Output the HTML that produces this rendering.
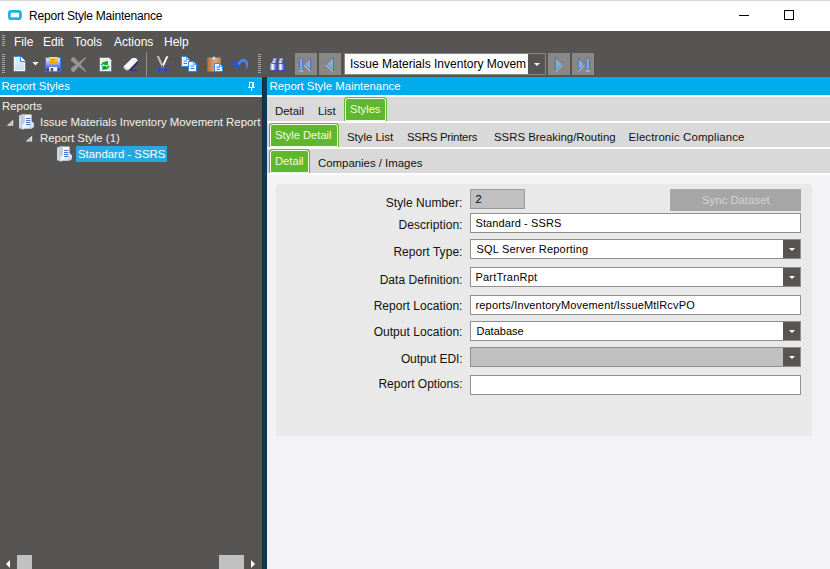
<!DOCTYPE html>
<html>
<head>
<meta charset="utf-8">
<title>Report Style Maintenance</title>
<style>
*{box-sizing:border-box;margin:0;padding:0}
html,body{width:830px;height:569px;overflow:hidden;background:#f3f3f5}
body{font-family:"Liberation Sans",sans-serif;font-size:12px;color:#000;position:relative}
.abs{position:absolute}
.t{position:absolute;white-space:nowrap;line-height:14px}
/* title bar */
#titlebar{left:0;top:0;width:830px;height:31px;background:#fff;border-top:1px solid #d4d4d4}
/* dark bars */
#dark{left:0;top:31px;width:830px;height:46px;background:#575553}
.menu{color:#fff;font-size:12px;top:35px}
.grip{position:absolute;width:3px;background:repeating-linear-gradient(to bottom,#a9a7a5 0,#a9a7a5 1px,transparent 1px,transparent 2px)}
.navbtn{position:absolute;top:53px;width:22px;height:22px;background:#8a8886}
/* headers */
.hdr{position:absolute;top:77px;height:18px;background:#00acee;color:#fff;font-size:11.4px}
/* left panel */
#left{left:0;top:95px;width:262px;height:474px;background:#575553;border-top:2px solid #fff}
.tree{color:#f1f1f1;font-size:11.4px}
#split{left:262px;top:77px;width:5px;height:492px;background:#073a5d;border-left:1px solid #22282c}
/* right */
.tabrow{position:absolute;left:267px;width:563px;background:#d9d9d9}
.tab{position:absolute;font-size:11.4px;white-space:nowrap;line-height:14px;color:#111}
.gtab{position:absolute;background:#5eb72d;border:1px solid #5eb72d;border-bottom:none;border-radius:4px 4px 0 0;box-shadow:inset 0 0 0 1px #f2fbea}
.gtab span{position:absolute;color:#f3fbe8;font-size:11.4px;white-space:nowrap;line-height:14px}
#group{left:276px;top:184px;width:536px;height:252px;background:#e9e9e9;border-radius:3px}
.lbl{position:absolute;font-size:12px;white-space:nowrap;line-height:14px;text-align:right;width:200px;left:262.5px;color:#111;letter-spacing:.05px}
.inp{position:absolute;left:470px;width:331px;height:20px;background:#fff;border:1px solid #8f8f8f;font-size:11px;line-height:18px;padding-left:5.5px;white-space:nowrap;overflow:hidden;letter-spacing:.2px}
.dd{position:absolute;right:0;top:0;width:17px;height:18px;background:#575553}
.dd:after{content:"";position:absolute;left:5.5px;top:8px;border-left:3px solid transparent;border-right:3px solid transparent;border-top:3.2px solid #fff}
</style>
</head>
<body>
<!-- Title bar -->
<div id="titlebar" class="abs"></div>
<svg class="abs" style="left:6px;top:8px" width="18" height="14" viewBox="6 8 18 14"><rect x="9.4" y="11.45" width="11" height="7.2" rx="1.7" ry="1.7" fill="#fff" stroke="#1db3ea" stroke-width="2.8"/></svg>
<div class="t" style="left:29px;top:9px;font-size:12px;letter-spacing:-.2px;color:#000">Report Style Maintenance</div>
<div class="abs" style="left:739px;top:15px;width:10px;height:1px;background:#000"></div>
<div class="abs" style="left:784px;top:10px;width:10px;height:10px;border:1px solid #000"></div>

<!-- Menu + toolbar -->
<div id="dark" class="abs"></div>
<div class="grip" style="left:2px;top:35px;height:11px"></div>
<div class="grip" style="left:2px;top:54px;height:20px"></div>
<div class="t menu" style="left:14px">File</div>
<div class="t menu" style="left:43px">Edit</div>
<div class="t menu" style="left:74px">Tools</div>
<div class="t menu" style="left:114px">Actions</div>
<div class="t menu" style="left:164px">Help</div>

<!-- toolbar icons placeholder -->
<!--ICONS-->
<div class="grip" style="left:258px;top:54px;height:20px"></div>

<div class="navbtn" style="left:295px"></div>
<div class="navbtn" style="left:319px"></div>
<div class="abs" style="left:344px;top:53px;width:202px;height:22px;background:#fff;border:1px solid #8a8886"></div>
<div class="t" style="left:350px;top:57px;font-size:12px;width:176.3px;overflow:hidden;color:#000">Issue Materials Inventory Movement Report</div>
<div class="abs" style="left:528px;top:54px;width:17px;height:20px;background:#575553"></div>
<div class="abs" style="left:533.5px;top:63px;border-left:3px solid transparent;border-right:3px solid transparent;border-top:3.2px solid #fff"></div>
<div class="navbtn" style="left:548px"></div>
<div class="navbtn" style="left:572px"></div>

<svg class="abs" style="left:0;top:52px" width="600" height="25" viewBox="0 0 600 25">
<defs>
<linearGradient id="gdoc" x1="0" y1="0" x2="0" y2="1"><stop offset="0" stop-color="#e4f2fd"/><stop offset="1" stop-color="#bfdffa"/></linearGradient>
<linearGradient id="gsave" x1="0" y1="0" x2="0" y2="1"><stop offset="0" stop-color="#eef0fd"/><stop offset=".45" stop-color="#9aa6ee"/><stop offset="1" stop-color="#1c2cb0"/></linearGradient>
<linearGradient id="gyel" x1="0" y1="0" x2="0" y2="1"><stop offset="0" stop-color="#ffe94d"/><stop offset="1" stop-color="#f2a400"/></linearGradient>
<linearGradient id="gbrown" x1="0" y1="0" x2="1" y2="0"><stop offset="0" stop-color="#b8703a"/><stop offset=".6" stop-color="#e0a878"/><stop offset="1" stop-color="#c98850"/></linearGradient>
<linearGradient id="gnav" x1="0" y1="0" x2="0" y2="1"><stop offset="0" stop-color="#a0a8bc"/><stop offset=".5" stop-color="#98a6c0"/><stop offset=".52" stop-color="#7cb0d2"/><stop offset="1" stop-color="#86b4d4"/></linearGradient>
<linearGradient id="gbin" x1="0" y1="0" x2="0" y2="1"><stop offset="0" stop-color="#c4ccf6"/><stop offset=".5" stop-color="#7c88de"/><stop offset="1" stop-color="#2a38a8"/></linearGradient>
<linearGradient id="ger" x1="0" y1="0" x2="1" y2="1"><stop offset="0" stop-color="#ffffff"/><stop offset=".6" stop-color="#f2f5fb"/><stop offset="1" stop-color="#c4d0e6"/></linearGradient>
<linearGradient id="gbin2" x1="0" y1="0" x2="1" y2="0"><stop offset="0" stop-color="#8f9ae6"/><stop offset=".35" stop-color="#ffffff"/><stop offset=".6" stop-color="#7f8ade"/><stop offset="1" stop-color="#2c389e"/></linearGradient>
</defs>
<!-- new doc -->
<path d="M13.5 4.5H20.5L25.5 9.5V19.5H13.5Z" fill="url(#gdoc)"/>
<path d="M20.5 4.2L25.8 9.5H20.5Z" fill="#fff"/>
<path d="M20.5 4.5H13.5V19.5H25.5V9.5H20.5V4.5" fill="none" stroke="#1e8df2" stroke-width="1"/>
<path d="M19.5 5.5H14.5V18.5H24.5V10.5" fill="none" stroke="#f4faff" stroke-width="1"/>
<!-- dropdown arrow -->
<path d="M32.5 10H38.5L35.5 13.5Z" fill="#fff"/>
<!-- save -->
<rect x="45.5" y="5.5" width="15" height="14" fill="url(#gsave)" stroke="#2b7bea" stroke-width="1"/>
<rect x="49" y="5" width="9" height="6" fill="url(#gyel)"/>
<rect x="51" y="7" width="4" height="1" fill="#d89000"/>
<rect x="51" y="9" width="2" height="1" fill="#d89000"/>
<rect x="49.2" y="15" width="8" height="4.5" fill="#f4f6ff"/>
<rect x="50.7" y="16" width="2.5" height="3.6" fill="#555"/>
<rect x="45" y="19.3" width="16" height=".9" fill="#2b7bea"/>
<!-- X -->
<g transform="translate(0,-52)" fill="#969593"><path d="M71 60.8Q70.6 58.4 72.2 57.4Q73.6 56.6 74.6 57.6L86.2 71.2L85.7 72Z"/><path d="M71 68.2Q70.6 70.6 72.2 71.6Q73.6 72.4 74.6 71.4L86.2 57.7L85.6 57Z"/></g>
<!-- refresh doc -->
<g transform="translate(0,-52)"><path d="M99.5 57.5H108.5L111.5 60.5V71.5H99.5Z" fill="url(#gdoc)" stroke="#1690f2" stroke-width="1"/>
<path d="M100.5 58.5H108V61H110.5V70.5H100.5Z" fill="none" stroke="#f6fbff" stroke-width="1"/>
<path d="M108.3 57.2V60.8H111.8Z" fill="#fff"/>
<path d="M100.8 64.8Q103.2 61 106.4 61.5L107.7 60.6L107.9 64.9L103.6 64.7L105 63.5Q103.2 63.5 101.8 65.6Z" fill="#0f9d10"/>
<path d="M109.6 66.2Q107.2 70 104 69.5L102.7 70.4L102.5 66.1L106.8 66.3L105.4 67.5Q107.2 67.5 108.6 65.4Z" fill="#0f9d10"/></g>
<!-- eraser -->
<g transform="translate(0,-52)"><path d="M130.4 70.5H137" stroke="#24267c" stroke-width="1" opacity=".75"/>
<path d="M137.8 60.6L138.3 62.6L130.8 70.8L129.2 69.2Z" fill="#24267c"/>
<path d="M132.2 57.9L136 58.1L137.9 60.6L129.5 69.3L127 70.5L123.8 68.6L123.8 66.3Z" fill="url(#ger)"/>
<path d="M123.8 66.3L123.8 68.6L127 70.5L129.5 69.3L128.6 68.6L126.8 69.3L124.6 67.8Z" fill="#a9bfdc"/></g>
<!-- separator -->
<rect x="146" y="-1" width="1" height="26" fill="#8f8d8b"/>
<!-- scissors -->
<path d="M156.8 4.2L158.9 4.2L163.7 14.6L162.1 15.8Z" fill="#e2e2e2"/>
<path d="M168.4 4.2L166.3 4.2L161.5 14.6L163.1 15.8Z" fill="#ffffff"/>
<path d="M158 5L162.6 14.6" stroke="#8a8a8a" stroke-width=".7"/>
<rect x="161.9" y="13.4" width="1.5" height="1.8" fill="#333"/>
<ellipse cx="159.2" cy="17.8" rx="1.7" ry="1.6" fill="#2a3a90" stroke="#2454e6" stroke-width="1.4"/>
<ellipse cx="166.2" cy="17.8" rx="1.7" ry="1.6" fill="#2a3a90" stroke="#2454e6" stroke-width="1.4"/>
<!-- copy -->
<path d="M181.5 4.5H186.5L189.5 7.5V14.5H181.5Z" fill="#f2f8ff" stroke="#1e8df2" stroke-width="1"/>
<path d="M186.5 4.5V7.5H189.5Z" fill="#fff" stroke="#1e8df2" stroke-width=".8"/>
<rect x="183.5" y="8.5" width="3.5" height="1" fill="#2b7bea"/><rect x="183.5" y="11" width="3.5" height="1" fill="#2b7bea"/>
<path d="M188.5 9.5H193.5L196.5 12.5V19.5H188.5Z" fill="#f2f8ff" stroke="#1e8df2" stroke-width="1"/>
<path d="M193.5 9.5V12.5H196.5Z" fill="#fff" stroke="#1e8df2" stroke-width=".8"/>
<rect x="190.5" y="13.5" width="3.5" height="1" fill="#2b7bea"/><rect x="190.5" y="16" width="3.5" height="1" fill="#2b7bea"/>
<!-- paste -->
<rect x="207.3" y="5.6" width="13.4" height="14" rx="1" fill="url(#gbrown)"/>
<path d="M210.5 7.8V6.6H212.6Q212.8 4.4 214 4.4Q215.2 4.4 215.4 6.6H217.5V7.8Z" fill="#e9e9e9" stroke="#8a8a8a" stroke-width=".5"/>
<path d="M214.5 11.5H219.5L222.5 14.5V19.5H214.5Z" fill="#f2f8ff" stroke="#1e8df2" stroke-width="1"/>
<path d="M219.5 11.5V14.5H222.5Z" fill="#fff" stroke="#1e8df2" stroke-width=".8"/>
<rect x="216.5" y="14.5" width="3.5" height="1" fill="#2b7bea"/><rect x="216.5" y="16.8" width="3.5" height="1" fill="#2b7bea"/>
<!-- undo -->
<g transform="translate(0,-52)"><path d="M237.4 63.8Q240 58.4 244.2 59.1Q248.8 60.4 248.1 65.6Q247.4 68.9 244.6 70.3Q246.5 67.6 246.2 64.9Q245.7 61.7 243 61.7Q240.8 61.9 239.6 65.4Z" fill="#4a86f0"/>
<path d="M234 59.8L234 67.9L242 67.9Z" fill="#2458e0"/></g>
<!-- grip 2 -->
<!-- binoculars -->
<g transform="translate(0,-52)">
<rect x="272.8" y="58.3" width="3.8" height="2.5" fill="#8d97e6"/><rect x="274.1" y="58.8" width="1.2" height="1.2" fill="#fff"/>
<rect x="279.2" y="58.3" width="3.8" height="2.5" fill="#8d97e6"/><rect x="280.5" y="58.8" width="1.2" height="1.2" fill="#fff"/>
<rect x="272.2" y="60.7" width="5.2" height="2.6" fill="url(#gbin2)"/>
<rect x="278.6" y="60.7" width="5.2" height="2.6" fill="url(#gbin2)"/>
<rect x="270.3" y="63.2" width="7.4" height="7.8" rx=".8" fill="url(#gbin2)"/>
<rect x="278.5" y="63.2" width="6.7" height="7.8" rx=".8" fill="url(#gbin2)"/>
<rect x="272" y="63" width="5.6" height=".8" fill="#3a48b0"/><rect x="278.6" y="63" width="5.6" height=".8" fill="#3a48b0"/>
<rect x="270.3" y="70.2" width="7.4" height=".9" fill="#2a369c"/><rect x="278.5" y="70.2" width="6.7" height=".9" fill="#2a369c"/>
</g>
<!-- nav first -->
<g transform="translate(0,-52)" stroke-linejoin="round">
<path d="M299.5 70.9H303" stroke="#e8e8e8" stroke-width="1" fill="none"/>
<rect x="299.5" y="58.3" width="3.2" height="11.6" rx="1.2" fill="url(#gnav)" stroke="#3b66c4" stroke-width=".8"/>
<path d="M304.2 65L310.4 71" stroke="#ececec" stroke-width="1" fill="none"/>
<path d="M310.6 58.2V70.2L304.3 63.9Z" fill="url(#gnav)" stroke="#3b66c4" stroke-width=".8"/>
<path d="M326 65L333.2 71.6" stroke="#ececec" stroke-width="1" fill="none"/>
<path d="M333.5 57.4V70.8L326.1 63.9Z" fill="url(#gnav)" stroke="#3b66c4" stroke-width=".8"/>
<!-- next -->
<path d="M562.6 65L555.6 71.6" stroke="#ececec" stroke-width="1" fill="none"/>
<path d="M555.4 57.4V70.8L562.8 63.9Z" fill="url(#gnav)" stroke="#3b66c4" stroke-width=".8"/>
<!-- last -->
<path d="M584.6 65L578.4 71" stroke="#ececec" stroke-width="1" fill="none"/>
<path d="M578.2 58.2V70.2L584.5 63.9Z" fill="url(#gnav)" stroke="#3b66c4" stroke-width=".8"/>
<path d="M586 70.9H589.6" stroke="#e8e8e8" stroke-width="1" fill="none"/>
<rect x="586.2" y="58.3" width="3.2" height="11.6" rx="1.2" fill="url(#gnav)" stroke="#3b66c4" stroke-width=".8"/>
</g>
</svg>

<!-- headers -->
<div class="hdr" style="left:0;width:262px"></div>
<div class="t" style="left:1.5px;top:79px;color:#fff;font-size:11.4px">Report Styles</div>
<div class="hdr" style="left:267px;width:563px"></div>
<div class="t" style="left:269.5px;top:79px;color:#fff;font-size:11.4px">Report Style Maintenance</div>

<svg class="abs" style="left:247px;top:81px" width="10" height="11" viewBox="247 81 10 11"><path d="M249 82H254V87H255V88H252.1V91H251.1V88H248V87H249ZM250 83V87H252V83Z" fill="#fff" fill-rule="evenodd"/></svg>
<!-- left panel -->
<div id="left" class="abs"></div>
<div class="t tree" style="left:2px;top:99px">Reports</div>
<div class="t tree" style="left:40px;top:115px">Issue Materials Inventory Movement Report</div>
<div class="t tree" style="left:40px;top:131px">Report Style (1)</div>
<div class="abs" style="left:76px;top:146px;width:91px;height:16px;background:#29a7e1"></div>
<div class="t tree" style="left:78px;top:147px;color:#fff">Standard - SSRS</div>

<svg class="abs" style="left:0;top:112px" width="80" height="52" viewBox="0 112 80 52">
<defs><linearGradient id="gtr" x1="0" y1="0" x2="1" y2="1"><stop offset="0" stop-color="#ffffff"/><stop offset=".6" stop-color="#eaf0f6"/><stop offset="1" stop-color="#b9cbdc"/></linearGradient></defs>
<path d="M6.8 125.7H13.2V119.8Z" fill="#e6e6e6"/><path d="M9.6 124.6H12.1V122.3Z" fill="#9b9997"/>
<path d="M25.8 141.5H32.1V135.8Z" fill="#e6e6e6"/><path d="M28.6 140.4H31V138.2Z" fill="#9b9997"/>
<g transform="translate(0,0)"><path d="M19 115.6L23.4 114V129.6L19 128.2Z" fill="#c9d7e4"/><path d="M21.6 114.8L22.4 114.5V129.2L21.6 129Z" fill="#aebfd0"/><path d="M23.4 114H24.4V122.5L22.6 124.4V129.4L23.4 129.6Z" fill="#eef3f8"/>
<path d="M24.4 114.6H31.6V121.2L34 123.2V127L31.6 128.8H22.8V124.4L24.4 122.5Z" fill="url(#gtr)"/>
<path d="M26 118H30.4M26 120H30.4M26 122H30.4M26 124H30.4" stroke="#3566c0" stroke-width=".9" transform="translate(0,.5)"/></g>
<g transform="translate(38,32)"><path d="M19 115.6L23.4 114V129.6L19 128.2Z" fill="#c9d7e4"/><path d="M21.6 114.8L22.4 114.5V129.2L21.6 129Z" fill="#aebfd0"/><path d="M23.4 114H24.4V122.5L22.6 124.4V129.4L23.4 129.6Z" fill="#eef3f8"/>
<path d="M24.4 114.6H31.6V121.2L34 123.2V127L31.6 128.8H22.8V124.4L24.4 122.5Z" fill="url(#gtr)"/>
<path d="M26 118H30.4M26 120H30.4M26 122H30.4M26 124H30.4" stroke="#3566c0" stroke-width=".9" transform="translate(0,.5)"/></g>
</svg>
<div id="split" class="abs"></div>

<!-- right: tab rows -->
<div class="abs" style="left:267px;top:95px;width:563px;height:80px;background:#fbfbfb"></div>
<div class="tabrow" style="top:97px;height:24px"></div>
<div class="tabrow" style="top:123px;height:24px"></div>
<div class="tabrow" style="top:149px;height:24px"></div>

<div class="tab" style="left:275px;top:104px">Detail</div>
<div class="tab" style="left:318px;top:104px">List</div>
<div class="gtab" style="left:344px;top:97px;width:43px;height:24px"><span style="left:5px;top:4px;font-size:11.2px">Styles</span></div>

<div class="gtab" style="left:269px;top:123px;width:70px;height:24px"><span style="left:5px;top:4px;font-size:11.2px">Style Detail</span></div>
<div class="tab" style="left:347px;top:130px">Style List</div>
<div class="tab" style="left:407px;top:130px;letter-spacing:-.25px">SSRS Printers</div>
<div class="tab" style="left:494px;top:130px">SSRS Breaking/Routing</div>
<div class="tab" style="left:628.5px;top:130px;letter-spacing:.13px">Electronic Compliance</div>

<div class="gtab" style="left:269px;top:149px;width:41px;height:24px"><span style="left:5px;top:4px;font-size:11.2px">Detail</span></div>
<div class="tab" style="left:318px;top:156px">Companies / Images</div>

<!-- group -->
<div id="group" class="abs"></div>
<div class="lbl" style="top:196px">Style Number:</div>
<div class="lbl" style="top:218px">Description:</div>
<div class="lbl" style="top:245px">Report Type:</div>
<div class="lbl" style="top:273px">Data Definition:</div>
<div class="lbl" style="top:299px">Report Location:</div>
<div class="lbl" style="top:325px">Output Location:</div>
<div class="lbl" style="top:352px;letter-spacing:-.1px">Output EDI:</div>
<div class="lbl" style="top:377px;letter-spacing:0">Report Options:</div>

<div class="inp" style="top:189px;width:55px;padding-left:4.5px;background:#c0c0c0;border-color:#9a9a9a">2</div>
<div class="abs" style="left:670px;top:189px;width:131px;height:22px;background:#a6a6a6"></div>
<div class="t" style="left:702px;top:193px;font-size:11.4px;color:#d4d4d4">Sync Dataset</div>
<div class="inp" style="top:213px;letter-spacing:.1px;padding-left:4.5px">Standard - SSRS</div>
<div class="inp" style="top:239px">SQL Server Reporting<div class="dd"></div></div>
<div class="inp" style="top:267px;padding-left:4.5px">PartTranRpt<div class="dd"></div></div>
<div class="inp" style="top:295px;letter-spacing:.17px;padding-left:4.5px">reports/InventoryMovement/IssueMtlRcvPO</div>
<div class="inp" style="top:321px;letter-spacing:.02px">Database<div class="dd"></div></div>
<div class="inp" style="top:347px;background:#c0c0c0"><div class="dd"></div></div>
<div class="inp" style="top:375px"></div>

<!-- scrollbar in left -->
<div class="abs" style="left:6px;top:559.5px;border-top:4px solid transparent;border-bottom:4px solid transparent;border-right:4.5px solid #fff"></div>
<div class="abs" style="left:17px;top:555px;width:15px;height:14px;background:#c1c1c1"></div>
<div class="abs" style="left:219px;top:555px;width:25px;height:14px;background:#c1c1c1"></div>
<div class="abs" style="left:251px;top:559.5px;border-top:4px solid transparent;border-bottom:4px solid transparent;border-left:4.5px solid #fff"></div>
</body>
</html>
